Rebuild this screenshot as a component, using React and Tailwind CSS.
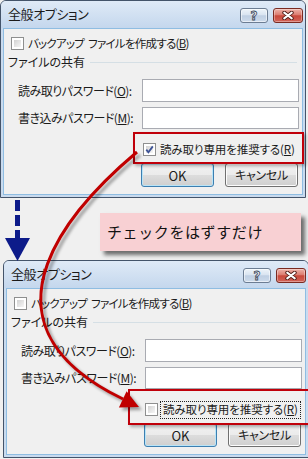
import React from "react";

const jp = "font-['Noto_Sans_CJK_JP',sans-serif]";

function CheckBox({ checked }) {
  return (
    <span className="relative w-[13px] h-[13px] shrink-0 border border-[#8e8f8f] bg-white p-[2px] flex">
      <span className="flex-1 bg-[linear-gradient(135deg,#d2d2d2,#f6f6f6)]" />
      {checked && (
        <svg className="absolute left-[0px] top-[0px]" width="11" height="11" viewBox="0 0 11 11">
          <path d="M2.3 5.6 L4.4 8.2 L8.8 2.4" fill="none" stroke="#3d5396" strokeWidth="1.8" />
        </svg>
      )}
    </span>
  );
}

function HelpBtn() {
  return (
    <div className="w-[28px] h-[15px] rounded-[3px] border border-[#6c7d93] bg-[linear-gradient(#eef4fa_0%,#d9e4f1_45%,#bfcfe3_52%,#cddbec_100%)] shadow-[inset_0_0_0_1px_rgba(255,255,255,0.55)] flex items-center justify-center">
      <span className="text-[12px] font-bold leading-none text-[#eef2f7] [-webkit-text-stroke:0.8px_#3c4758] font-['DejaVu_Sans',sans-serif]">?</span>
    </div>
  );
}

function CloseBtn() {
  return (
    <div className="w-[30px] h-[15px] rounded-[3px] border border-[#7a2b22] bg-[linear-gradient(#eeb3a9_0%,#dc7c70_45%,#c9483a_52%,#d1645a_100%)] shadow-[inset_0_0_0_1px_rgba(255,255,255,0.35)] flex items-center justify-center">
      <svg width="12" height="9" viewBox="0 0 12 9">
        <path d="M2.2 1.6 L9.8 7.4 M9.8 1.6 L2.2 7.4" stroke="#4a1812" strokeWidth="3.8" strokeLinecap="round" />
        <path d="M2.2 1.6 L9.8 7.4 M9.8 1.6 L2.2 7.4" stroke="#ffffff" strokeWidth="2" strokeLinecap="round" />
      </svg>
    </div>
  );
}

function Button({ children, isDefault }) {
  return (
    <div
      className={
        isDefault
          ? "w-[73px] h-[24px] rounded-[3px] border border-[#3c7fb1] bg-[linear-gradient(#f2f2f2_0%,#ebebeb_50%,#dddddd_50%,#cfcfcf_100%)] shadow-[inset_0_0_0_1px_#b9e4f7] flex items-center justify-center text-[13px] whitespace-nowrap"
          : "w-[73px] h-[24px] rounded-[3px] border border-[#707070] bg-[linear-gradient(#f2f2f2_0%,#ebebeb_50%,#dddddd_50%,#cfcfcf_100%)] shadow-[inset_0_0_0_1px_#fcfcfc] flex items-center justify-center text-[12px] tracking-[-0.3px] whitespace-nowrap"
      }
    >
      {children}
    </div>
  );
}

function Dialog({ variant }) {
  const first = variant === 1;
  return (
    <div className={`relative w-[306px] h-[198px] shrink-0 flex flex-col rounded-t-[6px] border border-[#44546a] bg-[#c9dbef] text-[#1b1b1b] text-[12px] leading-none whitespace-nowrap ${jp} [font-feature-settings:'palt']`}>
      <div className="h-[27px] shrink-0 flex items-start rounded-t-[5px] bg-[linear-gradient(#dfeaf7,#c4d7ed)] pr-[2px]">
        <span className="mt-[5px] ml-[7px] text-[13px] leading-[16px] tracking-[-0.4px] text-[#1a1a1a]">全般オプション</span>
        <div className="ml-auto mt-[7px] flex gap-[5px]">
          <HelpBtn />
          <CloseBtn />
        </div>
      </div>
      <div className="flex-1 mx-[2px] mb-[2px] border border-[#8fbde2] bg-[#f0f0f0] flex flex-col">
        <div className="mt-[8px] h-[13px] flex items-center pl-[7px]">
          <CheckBox checked={false} />
          <span className="ml-[4px] text-[11.5px] tracking-[-0.75px]">
            バックアップ<span className="inline-block w-[4px]" />ファイルを作成する(<span className="underline">B</span>)
          </span>
        </div>
        <div className="mt-[5px] h-[14px] flex items-center pl-[4px]">
          <span>ファイルの共有</span>
          <div className="flex-1 h-px bg-[#d5dfe5] ml-[5px] mr-[5px]" />
        </div>
        <div className="mt-[10px] h-[23px] flex items-center">
          <span className="pl-[14px] w-[138px] shrink-0 tracking-[-0.5px]">
            読み取りパスワード(<span className="underline">O</span>):
          </span>
          <div className="w-[157px] h-full border border-[#a9abb2] bg-white" />
        </div>
        <div className="mt-[5px] h-[22px] flex items-center">
          <span className="pl-[14px] w-[138px] shrink-0 tracking-[-0.5px]">
            書き込みパスワード(<span className="underline">M</span>):
          </span>
          <div className="w-[157px] h-full border border-[#a9abb2] bg-white" />
        </div>
        <div className={`mt-[14px] h-[13px] flex items-center ${first ? "pl-[139px]" : "pl-[138px]"}`}>
          <CheckBox checked={first} />
          {first ? (
            <span className="ml-[4px] text-[11.5px] tracking-[-0.1px]">
              読み取り専用を推奨する(<span className="underline">R</span>)
            </span>
          ) : (
            <span className="ml-[2px] h-[18px] flex items-center px-[2px] border border-dotted border-[#222] text-[11.5px] tracking-[-0.1px]">
              読み取り専用を推奨する(<span className="underline">R</span>)
            </span>
          )}
        </div>
        <div className="mt-[7px] h-[24px] flex pl-[137px] gap-[11px]">
          <Button isDefault>OK</Button>
          <Button>キャンセル</Button>
        </div>
      </div>
      {first ? (
        <div className="absolute left-[132px] top-[131px] w-[171px] h-[32px] border-2 border-[#c0000a] shadow-[2px_2px_3px_rgba(0,0,0,0.3)]" />
      ) : (
        <div className="absolute left-[124px] top-[128px] w-[200px] h-[36px] border-2 border-[#c0000a] shadow-[2px_2px_3px_rgba(0,0,0,0.3)]" />
      )}
    </div>
  );
}

export default function App() {
  const curve = "M137 152 C80 200 -40 320 123 399";
  const head = "139,407 118.9,407.4 126.6,391.2";
  return (
    <div className="relative w-[308px] h-[459px] overflow-hidden bg-[#f0f0f0]">
      <div className="flex flex-col">
        <Dialog variant={1} />
        <div className="h-[62px] shrink-0 pt-[15px] pl-[100px]">
          <div className={`w-[201px] h-[38px] bg-[#f8d0d3] shadow-[4px_4px_4px_rgba(0,0,0,0.55)] flex items-center pl-[7px] text-[15px] tracking-[0.6px] text-[#111] whitespace-nowrap ${jp}`}>
            チェックをはずすだけ
          </div>
        </div>
        <div className="pl-[3px]">
          <Dialog variant={2} />
        </div>
      </div>
      <svg className="absolute left-0 top-0 pointer-events-none" width="308" height="459" viewBox="0 0 308 459">
        <defs>
          <filter id="sh" x="-20%" y="-20%" width="140%" height="140%">
            <feGaussianBlur stdDeviation="1.5" />
          </filter>
        </defs>
        <g fill="#0d1b8a">
          <rect x="15" y="200" width="5" height="11" />
          <rect x="15" y="215" width="5" height="11" />
          <rect x="15" y="230" width="5" height="9" />
          <polygon points="5,238 30,238 17.5,261" />
        </g>
        <g transform="translate(3,3)" filter="url(#sh)" opacity="0.35">
          <path d={curve} fill="none" stroke="#000" strokeWidth="3" />
          <polygon points={head} fill="#000" />
        </g>
        <path d={curve} fill="none" stroke="#c00000" strokeWidth="3" />
        <polygon points={head} fill="#c00000" />
      </svg>
    </div>
  );
}
